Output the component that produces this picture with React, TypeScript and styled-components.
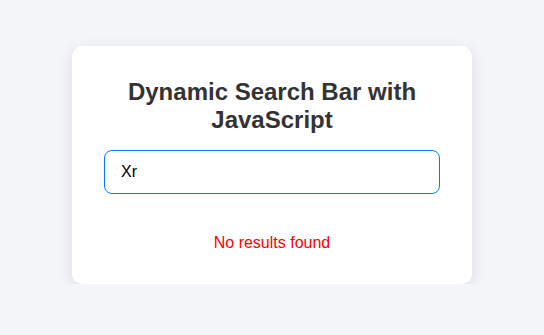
import { useState } from "react";
import { styled, createGlobalStyle } from "styled-components";

const GlobalStyle = createGlobalStyle`
  * {
    box-sizing: border-box;
  }
  body {
    margin: 0;
    padding-top: 46px;
    background: #f4f5f9;
    font-family: "Liberation Sans", Arial, sans-serif;
    display: flex;
    justify-content: center;
  }
`;

const items = ["Apple", "Banana", "Cherry", "Grapes", "Mango", "Orange"];

function App() {
  const [query, setQuery] = useState("Xr");
  const results = items.filter((item) =>
    item.toLowerCase().includes(query.toLowerCase())
  );

  return (
    <>
      <GlobalStyle />
      <Card>
        <Title>Dynamic Search Bar with JavaScript</Title>
        <SearchInput
          type="text"
          value={query}
          autoFocus
          onChange={(e) => setQuery(e.target.value)}
        />
        <Results>
          {results.length === 0 ? (
            <Message>No results found</Message>
          ) : (
            results.map((r) => <ResultItem key={r}>{r}</ResultItem>)
          )}
        </Results>
      </Card>
    </>
  );
}

export default App;

const Card = styled.div`
  width: 400px;
  padding: 32px;
  background: #ffffff;
  border-radius: 10px;
  box-shadow: 0 4px 16px rgba(0, 0, 0, 0.1);
  display: flex;
  flex-direction: column;
`;

const Title = styled.h2`
  margin: 0 0 16px;
  color: #333333;
  font-size: 24px;
  font-weight: 700;
  text-align: center;
`;

const SearchInput = styled.input`
  width: 100%;
  padding: 12px 16px;
  font-family: "Liberation Sans", Arial, sans-serif;
  font-size: 16px;
  color: #000000;
  border: 1px solid #007bff;
  border-radius: 8px;
  outline: none;
`;

const Results = styled.div`
  margin-top: 40px;
  display: flex;
  flex-direction: column;
`;

const Message = styled.p`
  margin: 0;
  color: #ff0000;
  font-size: 16px;
  text-align: center;
`;

const ResultItem = styled.div`
  padding: 8px 0;
  color: #333333;
  font-size: 16px;
`;
